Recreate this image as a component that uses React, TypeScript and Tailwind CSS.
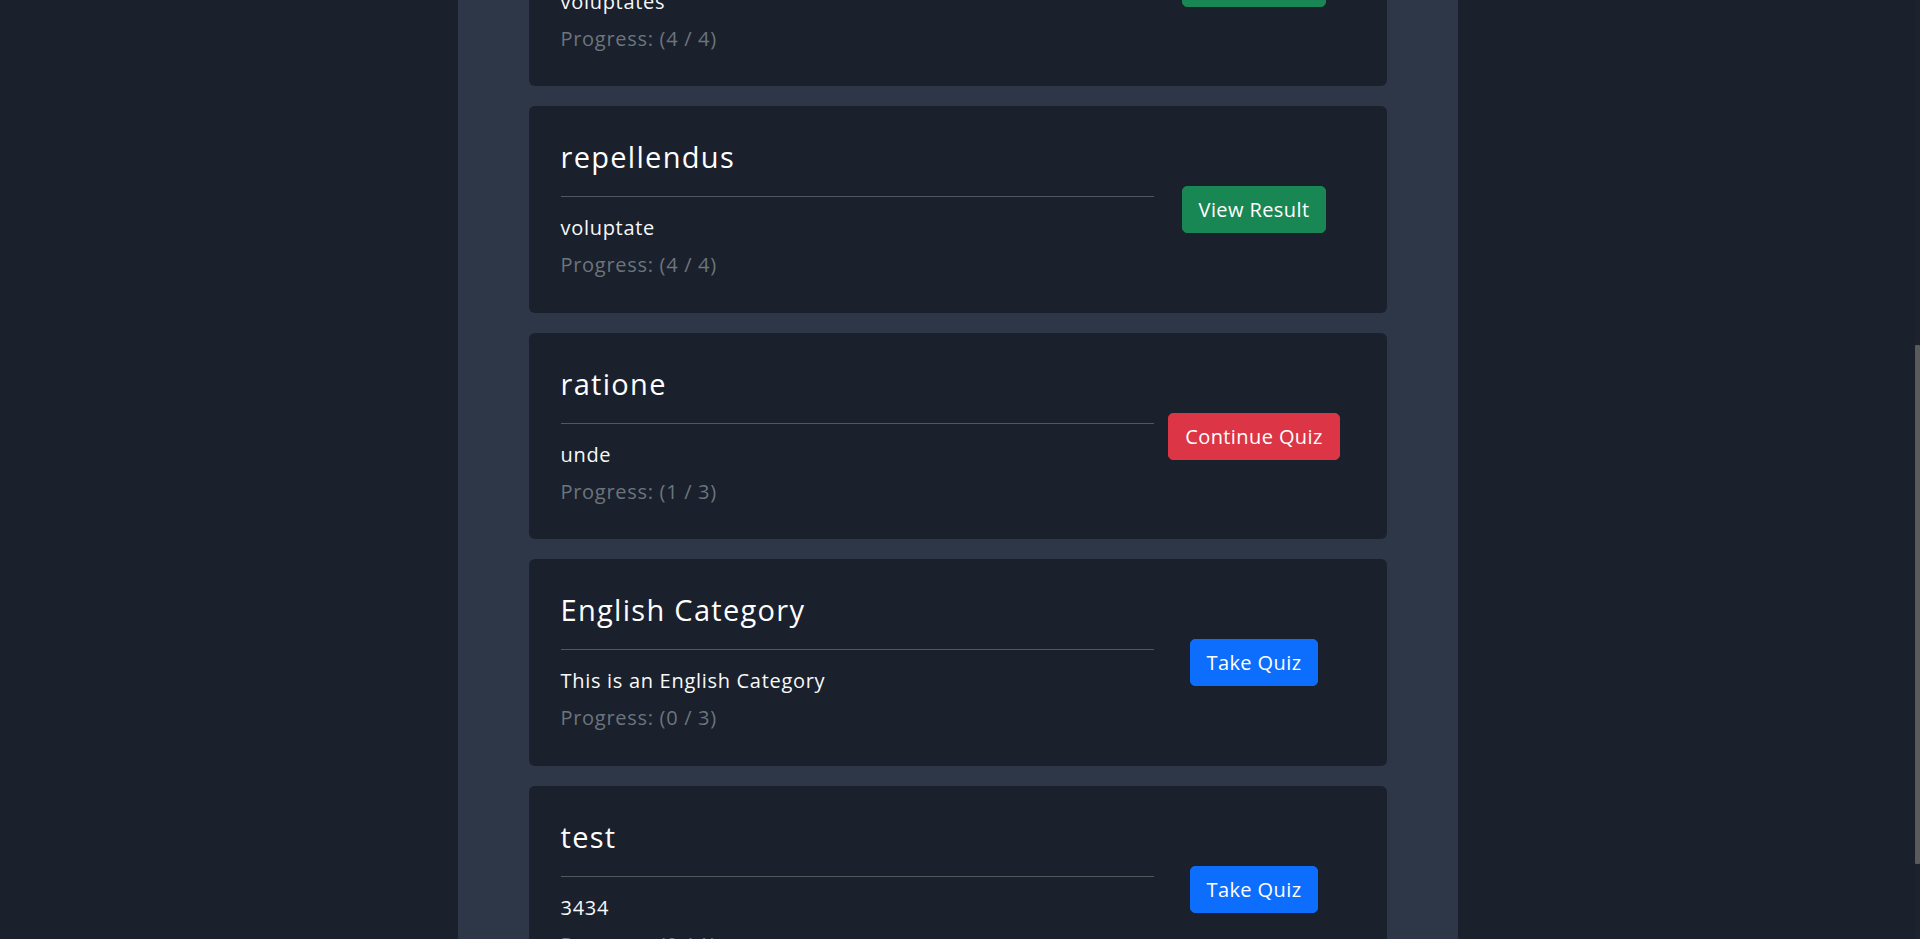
import React from "react";

type Quiz = {
  title: string;
  description: string;
  done: number;
  total: number;
  action: "result" | "continue" | "take";
};

const quizzes: Quiz[] = [
  { title: "\u00a0", description: "voluptates", done: 4, total: 4, action: "result" },
  { title: "repellendus", description: "voluptate", done: 4, total: 4, action: "result" },
  { title: "ratione", description: "unde", done: 1, total: 3, action: "continue" },
  { title: "English Category", description: "This is an English Category", done: 0, total: 3, action: "take" },
  { title: "test", description: "3434", done: 0, total: 1, action: "take" },
];

function ActionButton({ action }: { action: Quiz["action"] }) {
  if (action === "result") {
    return (
      <button className="h-[47px] rounded-[5px] border border-[#198754] bg-[#198754] px-4 text-[20px] leading-[29px] tracking-[0.4px] text-white">
        View Result
      </button>
    );
  }
  if (action === "continue") {
    return (
      <button className="h-[47px] rounded-[5px] border border-[#dc3545] bg-[#dc3545] px-4 text-[20px] leading-[29px] tracking-[0.4px] text-white">
        Continue Quiz
      </button>
    );
  }
  return (
    <button className="h-[47px] rounded-[5px] border border-[#0d6efd] bg-[#0d6efd] px-4 text-[20px] leading-[29px] tracking-[0.4px] text-white">
      Take Quiz
    </button>
  );
}

function QuizCard({ quiz }: { quiz: Quiz }) {
  return (
    <div className="flex shrink-0 items-center rounded-md bg-[#1a202c] px-8 pt-[33px] pb-[32.5px]">
      <div className="w-[593px]">
        <h3 className="text-[29px] leading-[35px] tracking-[1.3px] text-white">{quiz.title}</h3>
        <hr className="mt-[22px] border-0 border-t border-[#53585f]" />
        <p className="mt-[16px] text-[20px] leading-[30px] tracking-[0.7px] text-[#f8f9fa]">{quiz.description}</p>
        <p className="mt-[7px] text-[20px] leading-[30px] tracking-[0.7px] text-[#6c757d]">
          Progress: ({quiz.done} / {quiz.total})
        </p>
      </div>
      <div className="flex flex-1 justify-center">
        <ActionButton action={quiz.action} />
      </div>
    </div>
  );
}

export default function App() {
  return (
    <div
      className="flex h-[939px] w-full overflow-hidden bg-[#1a202c]"
      style={{ fontFamily: '"Open Sans", "Noto Sans", sans-serif' }}
    >
      <main className="flex flex-1 justify-center">
        <section className="h-full w-[1000px] overflow-hidden bg-[#2d3748] px-[71px]">
          <div className="-mt-[120.5px] flex flex-col gap-5">
            {quizzes.map((q, i) => (
              <QuizCard key={i} quiz={q} />
            ))}
          </div>
        </section>
      </main>
      <div className="flex w-[5px] flex-col bg-[#1d222d]">
        <div className="mt-[345px] h-[519px] w-full rounded-[1px] bg-[#5a5a5a]" />
      </div>
    </div>
  );
}
